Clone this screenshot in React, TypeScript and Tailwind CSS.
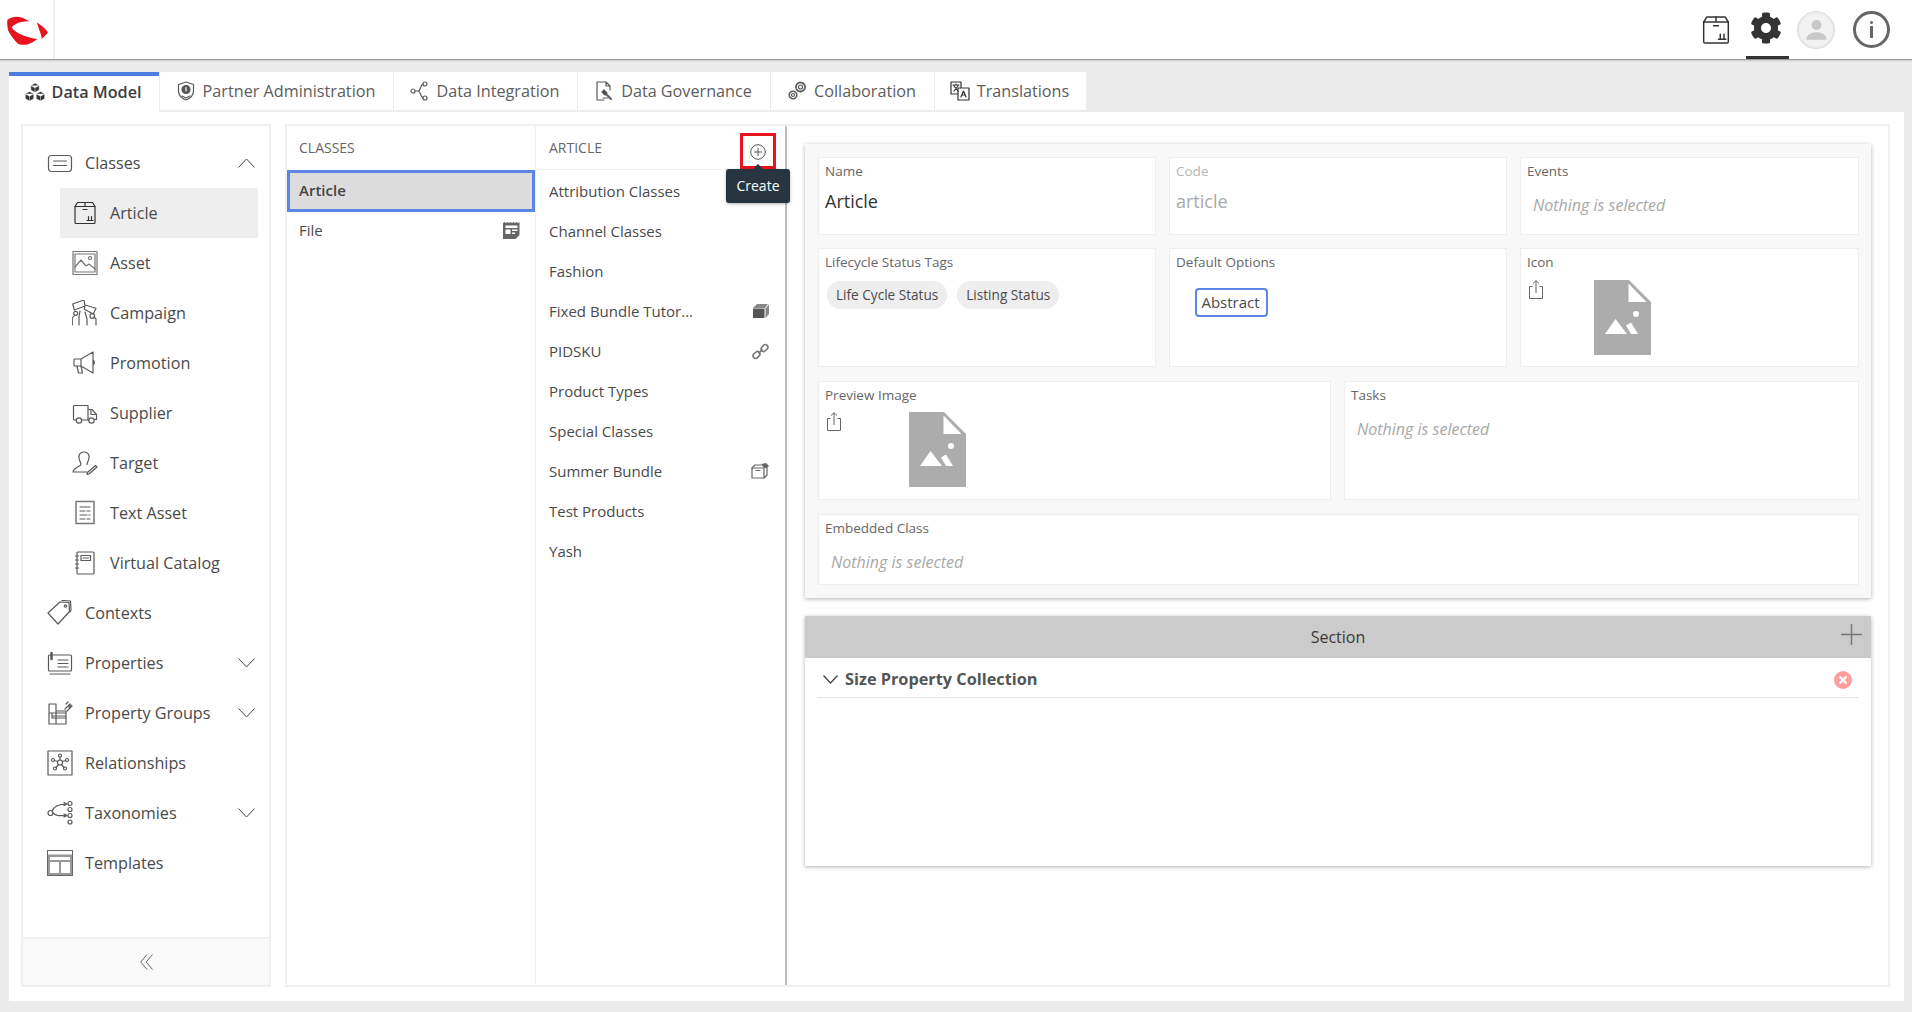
import React from 'react';
import { FaCog } from 'react-icons/fa';

type IconProps = { className?: string };

const Svg = ({ className, children, box = '0 0 26 26' }: IconProps & { children: React.ReactNode; box?: string }) => (
  <svg viewBox={box} className={className} fill="none" stroke="#5a5a5a" strokeWidth="1.2" strokeLinecap="round" strokeLinejoin="round">
    {children}
  </svg>
);

const Logo = () => (
  <svg viewBox="0 0 42 30" className="w-[42px] h-[30px]" fill="#e5141e">
    <path d="M22.300 5.300C17 2 13 .7 9.700 .7 6 1 2 2 .3 4 0 8 .5 12 1.300 14.700 4 20 8 25 11.300 28 14 29 17 29 19.700 28.700 24 27.500 28 25 30.300 23 24 22 18 20.500 13 18 9 16 6 14 4.700 11.300 7 9 10 7 13 6.300 16 5.600 19 5.300 22.300 5.300Z" />
    <path d="M29.700 6.300C34 9 38 12.500 41 16.300 39 19 37 21 34.700 23 34.500 20 33.500 17 32.300 14 31.500 11 30.500 8.500 29.700 6.300Z" />
  </svg>
);

const Chevron = ({ up }: { up?: boolean }) => (
  <svg viewBox="0 0 17 10" className="w-[17px] h-[10px]" fill="none" stroke="#444" strokeWidth="1">
    <path d={up ? 'M.5 9.500L8.500 1l8 8.500' : 'M.5 .5L8.500 9l8-8.500'} />
  </svg>
);

const BoxIcon = ({ className }: IconProps) => (
  <Svg className={className}>
    <path d="M5.500 2.500h15l2.500 4v16a1 1 0 0 1-1 1H4a1 1 0 0 1-1-1v-16z" stroke="#333" />
    <path d="M3 6.500h20M13 2.500v4M11 9.500h4" stroke="#333" />
    <path d="M15 20.500h6M16.500 20v-3.500M19.500 20v-3.500" stroke="#333" />
  </Svg>
);
const ClassesIcon = ({ className }: IconProps) => (
  <Svg className={className}><rect x="1.500" y="5.500" width="23" height="16" rx="3" /><path d="M6.500 11h13M6.500 15.500h13" /></Svg>
);
const AssetIcon = ({ className }: IconProps) => (
  <Svg className={className}><rect x="1" y="1.500" width="24" height="23" stroke="#777" /><rect x="3" y="4" width="20" height="18" stroke="#777" /><path d="M3 17l6-7 5 6 3-2 6 5" stroke="#777" /><circle cx="18" cy="8" r="1.500" stroke="#777" /></Svg>
);
const CampaignIcon = ({ className }: IconProps) => (
  <Svg className={className}>
    <path d="M.7 4L12 0l1 6L2.300 10zM13 5l11 3.300L21.300 14l-9-4.700z" /><circle cx="3.700" cy="13.300" r="2" /><circle cx="20.300" cy="16" r="2.300" />
    <path d="M.3 25v-7l2-2.500M7 25v-8l1-6M15 25v-6l-2-7M24 25v-6l-2-2" />
  </Svg>
);
const PromotionIcon = ({ className }: IconProps) => (
  <Svg className={className}>
    <path d="M21 2L9 9H3a1 1 0 0 0-1 1v5a1 1 0 0 0 1 1h6l12 7zM21 2v21M21 10a3 3 0 0 1 0 5M9 9v7" /><path d="M5 16l1.500 7h4L9 16" />
  </Svg>
);
const SupplierIcon = ({ className }: IconProps) => (
  <Svg className={className}>
    <path d="M4 20H2.500a1 1 0 0 1-1-1V6.500a1 1 0 0 1 1-1H16v14.500H10M16 9.500h4l4.500 5v5H22M16 20h1" /><path d="M19 10.500v4h5" /><circle cx="7" cy="20.500" r="2.700" /><circle cx="19.500" cy="20.500" r="2.700" />
  </Svg>
);
const TargetIcon = ({ className }: IconProps) => (
  <Svg className={className}>
    <path d="M12 2c-4 0-5.500 3-5 6 .3 2.500 2 5 2 6.500 0 2-7 2.500-8 7.500h14M12 2c4 0 5.500 3 5 6-.3 2.500-2 5-2 6.500" /><path d="M17 24l8-7-1.500-1.500-8 7-.5 2z" />
  </Svg>
);
const TextAssetIcon = ({ className }: IconProps) => (
  <Svg className={className}>
    <rect x="4" y="1.500" width="18" height="22" strokeWidth="1.500" stroke="#777" /><path d="M8 7h10M8 11h5M15 11h3M8 15h7M17 15h1M8 19h5M15 19h3" />
  </Svg>
);
const CatalogIcon = ({ className }: IconProps) => (
  <Svg className={className}>
    <rect x="5" y="2" width="17" height="22" rx="1" /><rect x="9" y="5.500" width="9.500" height="5" /><path d="M11 8h5.500M3.500 6h3M3.500 10h3M3.500 14h3M3.500 18h3" />
  </Svg>
);
const ContextsIcon = ({ className }: IconProps) => (
  <Svg className={className}>
    <path d="M1 13L13 2l9 .5.500 9L11 24z" /><path d="M15 .5l8.500.5.500 9-1 2" /><circle cx="18.500" cy="6" r="1.200" />
  </Svg>
);
const PropertiesIcon = ({ className }: IconProps) => (
  <Svg className={className}>
    <rect x="1.500" y="5" width="23" height="16" rx="1" /><path d="M11 10h10M11 13.500h10M11 17h10M3 24h20" /><path d="M4.500 3v6" strokeWidth="2.500" />
  </Svg>
);
const GroupsIcon = ({ className }: IconProps) => (
  <Svg className={className}>
    <path d="M2 4h7v7h10v13H2zM2 13h17M5 16h14M5 13v5h14M9 4v20" /><path d="M18 9l5-5M20 11l5-5M19 4l2-2M22 7l2-2" />
  </Svg>
);
const RelIcon = ({ className }: IconProps) => (
  <Svg className={className}>
    <rect x="1" y="1" width="24" height="24" />
    <circle cx="13" cy="12.500" r="2.500" /><circle cx="13" cy="5.500" r="1.500" /><circle cx="6" cy="10" r="1.500" /><circle cx="20" cy="10" r="1.500" /><circle cx="8" cy="18.500" r="1.500" /><circle cx="18" cy="18.500" r="1.500" />
    <path d="M13 7v3M7.500 10.500l3 1M18.500 10.500l-3 1M9 17.500l2.500-3M17 17.500l-2.500-3" />
  </Svg>
);
const TaxIcon = ({ className }: IconProps) => (
  <Svg className={className}>
    <circle cx="3.500" cy="13" r="2.500" /><circle cx="23" cy="3.500" r="2" /><circle cx="23" cy="9.500" r="2" /><circle cx="23" cy="15.500" r="2" /><circle cx="23" cy="22" r="2" />
    <path d="M5 11c2-5 6-7 15-7M17 2.500l3 1.500-3 1.500M6 13c3 3 6 3 14 2.500M17 14l3 1.500-3 1.500" />
  </Svg>
);
const TemplatesIcon = ({ className }: IconProps) => (
  <svg viewBox="0 0 26 26" className={className}>
    <rect x="0.500" y="0.500" width="25" height="25" fill="#999" stroke="#666" />
    <rect x="1" y="1" width="24" height="3.500" fill="#fff" />
    <rect x="3" y="7" width="20" height="3" fill="#fff" />
    <rect x="3" y="12" width="9" height="11" fill="#fff" />
    <rect x="14" y="12" width="9" height="11" fill="#fff" />
  </svg>
);

const DataModelIcon = ({ className }: IconProps) => (
  <svg viewBox="0.500 0.500 19 17.500" className={className} fill="#333" stroke="#fff" strokeWidth="0.500">
    <path d="M6 3L10 .7 14 3v4.400L10 9.700 6 7.400zM6 3l4 2.300L14 3M10 5.300v4.400" />
    <path d="M.8 11l4-2.300 4 2.300v4.600l-4 2.300-4-2.300zM.8 11l4 2.300 4-2.300M4.800 13.300v4.600" />
    <path d="M11.200 11l4-2.300 4 2.300v4.600l-4 2.300-4-2.300zM11.200 11l4 2.300 4-2.300M15.200 13.300v4.600" />
  </svg>
);
const ShieldIcon = ({ className }: IconProps) => (
  <Svg className={className} box="0 0 20 20">
    <path d="M10 1l7.500 2.500v6c0 4.500-3.500 8-7.500 9.500-4-1.500-7.500-5-7.500-9.500v-6z" /><circle cx="10" cy="8.500" r="4" fill="#555" />
    <path d="M10 6.500v3.500" stroke="#fff" /><path d="M6 15l4 2 4-2" />
  </Svg>
);
const ShareIcon = ({ className }: IconProps) => (
  <Svg className={className} box="0 0 20 20">
    <circle cx="3" cy="10" r="2" /><circle cx="15" cy="3" r="2" /><circle cx="15" cy="17" r="2" /><path d="M5 10h3c3 0 2-6 5-7M8 10c3 0 2 6 5 7" />
  </Svg>
);
const GovIcon = ({ className }: IconProps) => (
  <Svg className={className} box="0 0 20 20">
    <path d="M12 1H3v18h7M12 1l4 4v4M12 1v4h4" /><path d="M10 9l3 3-2 2-3-3z" fill="#444" /><path d="M12 13l5 5" strokeWidth="2" /><path d="M9 17h5" />
  </Svg>
);
const CollabIcon = ({ className }: IconProps) => (
  <Svg className={className} box="0 0 20 20">
    <circle cx="13.500" cy="6" r="2" /><circle cx="13.500" cy="6" r="4.500" strokeDasharray="2 1.200" strokeWidth="1.800" />
    <circle cx="6" cy="14" r="1.500" /><circle cx="6" cy="14" r="3.800" strokeDasharray="2 1" strokeWidth="1.600" />
  </Svg>
);
const TransIcon = ({ className }: IconProps) => (
  <Svg className={className} box="0 0 20 20">
    <rect x="1" y="1" width="10" height="12" stroke="#333" /><rect x="8" y="7" width="11" height="12" fill="#fff" stroke="#333" />
    <path d="M3 4h6M6 3v1M4 10l4-5M4 5l4 5" stroke="#333" /><path d="M11 16l2.500-6 2.500 6M12 14h3" stroke="#333" />
  </Svg>
);

const FileFormIcon = ({ className }: IconProps) => (
  <svg viewBox="0 0 17 17" className={className}>
    <path d="M0 1l1.500-1 1.500 1 1.500-1 1.500 1 1.500-1 1.500 1 1.500-1 1.500 1 1.500-1 1.500 1 1.500-1V13l-4 4H0z" fill="#666" />
    <rect x="2.500" y="3.500" width="12" height="2.500" fill="#fff" /><rect x="2.500" y="7.500" width="5" height="4.500" fill="#fff" /><rect x="9" y="7.500" width="5.500" height="1.500" fill="#fff" /><rect x="9" y="10.500" width="3" height="1.500" fill="#fff" />
  </svg>
);
const CubeIcon = ({ className }: IconProps) => (
  <svg viewBox="0 0 16 16" className={className}>
    <path d="M0 5l4-4h11l-3 4z" fill="#888" /><path d="M0 5.500h11.500V15H0z" fill="#555" /><path d="M12.500 5.500L16 1.500V11l-3.500 4z" fill="#888" />
  </svg>
);
const LinkIcon = ({ className }: IconProps) => (
  <Svg className={className} box="0 0 16 16">
    <path d="M6.500 9.500l3-3" strokeWidth="1.500" stroke="#777" />
    <path d="M8.500 5l2.500-3a2.500 2.500 0 0 1 3.500 3.500l-3 2.500a2.500 2.500 0 0 1-3-3z" strokeWidth="1.500" stroke="#777" />
    <path d="M7.500 11l-2.500 3a2.500 2.500 0 0 1-3.500-3.500l3-2.500a2.500 2.500 0 0 1 3 3z" strokeWidth="1.500" stroke="#777" />
  </Svg>
);
const OpenBoxIcon = ({ className }: IconProps) => (
  <Svg className={className} box="0 0 18 16">
    <path d="M1 5h12v10H1zM13 15l3-3V5" stroke="#666" /><path d="M1 5l3-3h6" stroke="#666" /><path d="M5 7.500h4" stroke="#666" />
    <path d="M10 1l5-1 3 3-2 2h-3z" fill="#666" stroke="none" />
  </Svg>
);
const UploadIcon = () => (
  <svg viewBox="0 0 14 19" className="w-[14px] h-[19px] shrink-0" fill="none" stroke="#666" strokeWidth="1">
    <path d="M3.500 6.500H.500v12h13v-12h-3M7 13V.8M4 3.500L7 .7l3 2.800" />
  </svg>
);
const NoImage = () => (
  <svg viewBox="0 0 57 75" className="w-[57px] h-[75px] shrink-0">
    <path d="M0 0h35l22 22v53H0z" fill="#acacac" />
    <path d="M34.500 3.500V22h18z" fill="#fff" />
    <circle cx="42" cy="34" r="3" fill="#fff" />
    <path d="M11 54l10.500-15L33 54zM32 45.500l5-3L44 54h-7z" fill="#fff" />
  </svg>
);

const Cell = ({ label, muted, className, children }: { label: string; muted?: boolean; className?: string; children?: React.ReactNode }) => (
  <div className={`bg-white border border-[#eeeeee] px-[6px] pt-[4px] ${className ?? ''}`}>
    <div className={`text-[13.5px] leading-[19px] ${muted ? 'text-[#b4b4b4]' : 'text-[#666]'}`}>{label}</div>
    {children}
  </div>
);

const Nothing = () => (
  <div className="pl-[6px] pt-[13px] text-[16px] leading-[22px] italic text-[#a8a8a8]">Nothing is selected</div>
);

const subItems: [string, React.FC<IconProps>][] = [
  ['Article', BoxIcon],
  ['Asset', AssetIcon],
  ['Campaign', CampaignIcon],
  ['Promotion', PromotionIcon],
  ['Supplier', SupplierIcon],
  ['Target', TargetIcon],
  ['Text Asset', TextAssetIcon],
  ['Virtual Catalog', CatalogIcon],
];
const topItems: [string, React.FC<IconProps>, boolean][] = [
  ['Contexts', ContextsIcon, false],
  ['Properties', PropertiesIcon, true],
  ['Property Groups', GroupsIcon, true],
  ['Relationships', RelIcon, false],
  ['Taxonomies', TaxIcon, true],
  ['Templates', TemplatesIcon, false],
];

const tabs: [string, React.FC<IconProps>, string][] = [
  ['Data Model', DataModelIcon, 'w-[150px]'],
  ['Partner Administration', ShieldIcon, 'w-[233px]'],
  ['Data Integration', ShareIcon, 'w-[183px]'],
  ['Data Governance', GovIcon, 'w-[192px]'],
  ['Collaboration', CollabIcon, 'w-[163px]'],
  ['Translations', TransIcon, 'w-[151px]'],
];

const articles: [string, React.ReactNode][] = [
  ['Attribution Classes', null],
  ['Channel Classes', null],
  ['Fashion', null],
  ['Fixed Bundle Tutor...', <CubeIcon className="w-[16px] h-[16px]" />],
  ['PIDSKU', <LinkIcon className="w-[17px] h-[17px]" />],
  ['Product Types', null],
  ['Special Classes', null],
  ['Summer Bundle', <OpenBoxIcon className="w-[18px] h-[16px]" />],
  ['Test Products', null],
  ['Yash', null],
];

export default function App() {
  return (
    <div className="w-[1912px] h-[1012px] overflow-hidden bg-[#ececec] flex flex-col text-[#4a4a4a] font-['Open_Sans',sans-serif]">
      <header className="h-[60px] shrink-0 bg-white border-b border-[#999] shadow-[0_1px_2px_rgba(0,0,0,0.15)] flex items-center">
        <div className="w-[55px] h-full border-r-2 border-[#f0f0f0] pl-[7px] pt-[3px] flex items-center">
          <Logo />
        </div>
        <div className="ml-auto h-full flex items-center pr-[22px]">
          <BoxIcon className="w-[32px] h-[32px] mr-[14px]" />
          <div className="relative h-full w-[43px] flex items-center justify-center mr-[8px]">
            <FaCog className="w-[32px] h-[32px] -ml-[4px] -mt-[3px] text-[#333]" />
            <div className="absolute left-0 right-0 bottom-0 h-[3px] bg-[#333]" />
          </div>
          <div className="w-[38px] h-[38px] rounded-full border border-[#ddd] bg-[#f2f2f2] flex items-center justify-center shadow-[inset_0_0_3px_rgba(0,0,0,0.1)] mr-[18px]">
            <svg viewBox="0 0 24 24" className="w-[27px] h-[27px]" fill="#c8c8c8">
              <circle cx="12" cy="8" r="4.500" /><path d="M3 21c0-4 4-6.500 9-6.500s9 2.500 9 6.500z" />
            </svg>
          </div>
          <div className="w-[37px] h-[37px] rounded-full border-[3px] border-[#666] flex flex-col items-center justify-center gap-[2px]">
            <div className="w-[3px] h-[3px] bg-[#666] rounded-full" />
            <div className="w-[3px] h-[12px] bg-[#666]" />
          </div>
        </div>
      </header>

      <nav className="h-[52px] shrink-0 pl-[9px] pt-[12px] flex items-start">
        {tabs.map(([name, Icon, w], i) => (
          <div
            key={name}
            className={`${w} bg-white mr-[1px] pr-[2px] flex items-center justify-center gap-[7px] text-[16.2px] ${i === 0 ? 'h-[40px] pb-[4px] border-t-4 border-[#4a7de0] font-semibold text-[#3d3d3d]' : 'h-[38px] text-[#5c5c5c]'}`}
          >
            <Icon className="w-[20px] h-[20px]" />
            <span>{name}</span>
          </div>
        ))}
      </nav>

      <main className="w-[1895px] h-[889px] ml-[9px] bg-white pl-[12px] pr-[14px] pt-[12px] pb-[14px] flex gap-[14px]">
        <aside className="w-[250px] border-2 border-[#f0f0f0] flex flex-col">
          <div className="flex-1 pt-[12px] text-[16.2px] text-[#4a4a4a]">
            <div className="h-[50px] flex items-center pl-[24px] pr-[14px]">
              <ClassesIcon className="w-[26px] h-[26px] mr-[12px]" />
              <span>Classes</span>
              <div className="ml-auto flex"><Chevron up /></div>
            </div>
            <div>
              {subItems.map(([name, Icon], i) => (
                <div key={name} className={`h-[50px] w-[198px] ml-[37px] flex items-center pl-[12px] rounded-[2px] ${i === 0 ? 'bg-[#eeeeee]' : ''}`}>
                  <Icon className="w-[26px] h-[26px] mr-[12px]" />
                  <span>{name}</span>
                </div>
              ))}
            </div>
            {topItems.map(([name, Icon, chevron]) => (
              <div key={name} className="h-[50px] flex items-center pl-[24px] pr-[14px]">
                <Icon className="w-[26px] h-[26px] mr-[12px]" />
                <span>{name}</span>
                {chevron && <div className="ml-auto flex"><Chevron /></div>}
              </div>
            ))}
          </div>
          <div className="h-[48px] bg-[#f9f9f9] border-t-2 border-[#f0f0f0] flex items-center justify-center">
            <svg viewBox="0 0 13 16" className="w-[13px] h-[16px]" fill="none" stroke="#666" strokeWidth="1">
              <path d="M7 .5L.7 8 7 15.500M12.500 .5L6.200 8l6.300 7.500" />
            </svg>
          </div>
        </aside>

        <section className="flex-1 border-2 border-[#f0f0f0] flex min-w-0">
          <div className="w-[249px] border-r border-[#f0f0f0]">
            <div className="h-[44px] pb-[2px] pl-[12px] flex items-center text-[14px] text-[#666]">CLASSES</div>
            <div className="h-[42px] pb-[2px] border-[3px] border-[#5b86e5] bg-[#dcdcdc] pl-[9px] flex items-center text-[15px] font-semibold text-[#444]">Article</div>
            <div className="h-[40px] -mt-[2px] pl-[12px] pr-[15px] flex items-center justify-between text-[15px]">
              <span>File</span>
              <FileFormIcon className="w-[17px] h-[17px]" />
            </div>
          </div>

          <div className="relative w-[251px] border-r-2 border-[#bdbdbd]">
            <div className="h-[44px] pl-[13px] flex items-center text-[14px] text-[#666] border-b border-[#f0f0f0]">ARTICLE</div>
            <div className="pt-[1px]">
              {articles.map(([name, icon]) => (
                <div key={name} className="h-[40px] pl-[13px] pr-[16px] flex items-center justify-between text-[15px]">
                  <span>{name}</span>
                  {icon}
                </div>
              ))}
            </div>
            <div className="absolute left-[204px] top-[7px] w-[36px] h-[36px] border-[3px] border-[#e8141f] flex items-center justify-center">
              <svg viewBox="0 0 16 16" className="w-[16px] h-[16px] mt-[1px]" fill="none" stroke="#555" strokeWidth="1">
                <circle cx="8" cy="8" r="7.300" /><path d="M8 4v8M4 8h8" />
              </svg>
            </div>
            <div className="absolute left-[190px] top-[43px] w-[64px] h-[34px] pb-[2px] rounded-[3px] bg-[#263540] text-white text-[14px] flex items-center justify-center shadow-[0_1px_3px_rgba(0,0,0,0.3)]">
              <div className="absolute -top-[5px] left-[27px] w-0 h-0 border-x-[5px] border-x-transparent border-b-[5px] border-b-[#263540]" />
              Create
            </div>
          </div>

          <div className="flex-1 min-w-0 pl-[18px] pr-[17px] pt-[18px]">
            <div className="h-[454px] bg-[#f8f8f8] shadow-[0_1px_4px_rgba(0,0,0,0.3)] pl-[13px] pr-[12px] pt-[13px] flex flex-col gap-[13px]">
              <div className="flex gap-[13px] h-[78px]">
                <Cell label="Name" className="w-[338px]"><div className="text-[18px] leading-[25px] pt-[8px] text-[#333]">Article</div></Cell>
                <Cell label="Code" muted className="w-[338px]"><div className="text-[18px] leading-[25px] pt-[8px] text-[#aaa]">article</div></Cell>
                <Cell label="Events" className="flex-1"><Nothing /></Cell>
              </div>
              <div className="flex gap-[13px] h-[119px]">
                <Cell label="Lifecycle Status Tags" className="w-[338px]">
                  <div className="flex gap-[10px] pl-[2px] pt-[9px]">
                    {['Life Cycle Status', 'Listing Status'].map(t => (
                      <div key={t} className="h-[28px] px-[9px] rounded-full bg-[#eeeeee] text-[13.6px] flex items-center">{t}</div>
                    ))}
                  </div>
                </Cell>
                <Cell label="Default Options" className="w-[338px]">
                  <div className="pl-[19px] pt-[16px]">
                    <div className="w-[73px] h-[29px] pr-[2px] border-2 border-[#5b86e5] rounded-[4px] text-[15px] flex items-center justify-center">Abstract</div>
                  </div>
                </Cell>
                <Cell label="Icon" className="flex-1">
                  <div className="flex pl-[2px] pt-[8px]">
                    <UploadIcon />
                    <div className="ml-[51px]"><NoImage /></div>
                  </div>
                </Cell>
              </div>
              <div className="flex gap-[13px] h-[119px] mt-[1px]">
                <Cell label="Preview Image" className="w-[513px]">
                  <div className="flex pl-[2px] pt-[7px]">
                    <UploadIcon />
                    <div className="ml-[68px]"><NoImage /></div>
                  </div>
                </Cell>
                <Cell label="Tasks" className="flex-1"><Nothing /></Cell>
              </div>
              <Cell label="Embedded Class" className="h-[71px] mt-[1px]"><Nothing /></Cell>
            </div>

            <div className="mt-[18px] h-[250px] bg-white shadow-[0_1px_4px_rgba(0,0,0,0.3)]">
              <div className="relative h-[42px] bg-[#cbcbcb] flex items-center justify-center text-[16px] text-[#3a3a3a]">
                Section
                <svg viewBox="0 0 21 21" className="absolute right-[9px] top-[8px] w-[21px] h-[21px]" stroke="#777" strokeWidth="1.500">
                  <path d="M10.500 0v21M0 10.500h21" />
                </svg>
              </div>
              <div className="mx-[12px] h-[40px] pt-[4px] border-b border-[#e4e4e4] flex items-center pl-[6px] pr-[7px]">
                <div className="w-[15px] mr-[7px]">
                  <svg viewBox="0 0 15 9" className="w-[15px] h-[9px]" fill="none" stroke="#444" strokeWidth="1.200"><path d="M.5 .5L7.500 8l7-7.500" /></svg>
                </div>
                <span className="text-[16.3px] font-bold text-[#555]">Size Property Collection</span>
                <div className="ml-auto w-[18px] h-[18px] rounded-full bg-[#ff9e9b] flex items-center justify-center">
                  <svg viewBox="0 0 10 10" className="w-[10px] h-[10px]" stroke="#fff" strokeWidth="2.400"><path d="M1.500 1.500l7 7M8.500 1.500l-7 7" /></svg>
                </div>
              </div>
            </div>
          </div>
        </section>
      </main>
    </div>
  );
}
